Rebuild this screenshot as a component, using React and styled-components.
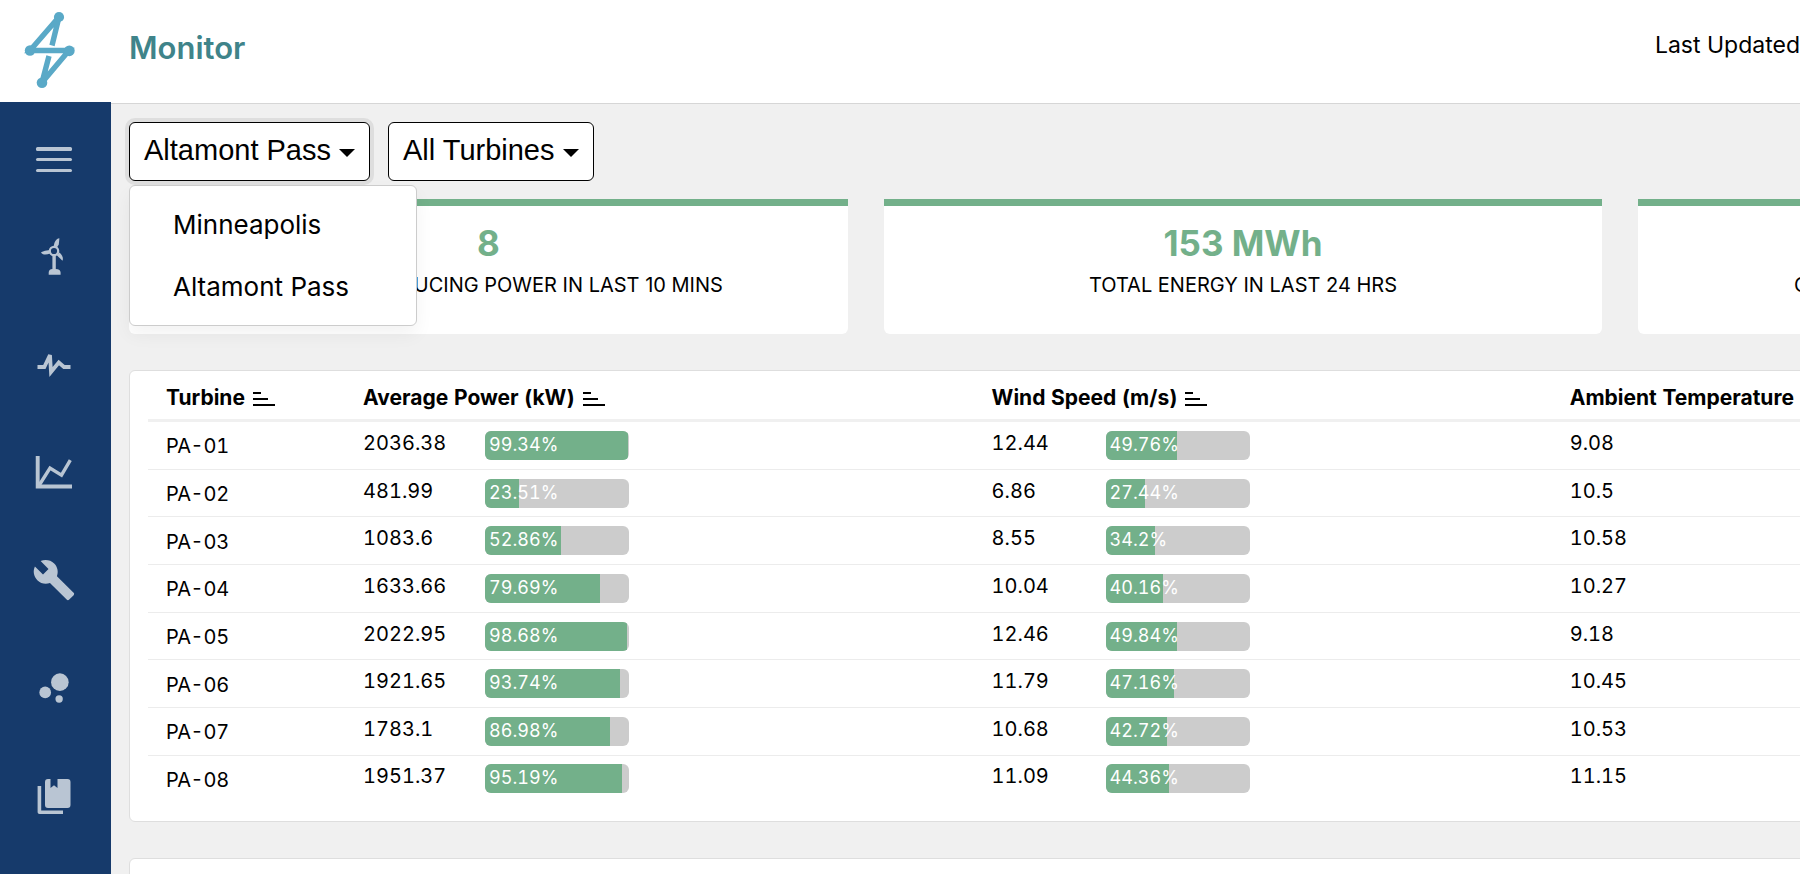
import React from "react";
import styled, { createGlobalStyle } from "styled-components";

const GlobalStyle = createGlobalStyle`
  *, *::before, *::after { box-sizing: border-box; }
  body { margin: 0; background: #f0f0f0; }
  button { font: inherit; color: inherit; }
`;

const Page = styled.div`
  display: grid;
  grid-template-columns: 111px minmax(0, 1fr);
  grid-template-rows: auto 1fr;
  height: 100vh;
  overflow: hidden;
  color: #000;
  background: #f0f0f0;
  font-family: Inter, "Liberation Sans", sans-serif;
  font-size: 20px;
`;

const Brand = styled.a`
  display: flex;
  height: 102px;
  padding: 10px 0 0 22px;
  background: #fff;
`;

const Header = styled.header`
  display: flex;
  justify-content: space-between;
  height: 104px;
  padding-left: 18px;
  background: #fff;
  border-bottom: 1px solid #d6d6d6;
  overflow: hidden;
`;

const Title = styled.h1`
  margin: 0;
  font-size: 31px;
  line-height: 95px;
  font-weight: 600;
  color: #3f848a;
`;

const Updated = styled.p`
  margin: 0;
  font-size: 23px;
  line-height: 91px;
  white-space: nowrap;
`;

const Sidebar = styled.nav`
  display: flex;
  flex-direction: column;
  margin-top: -2px;
  padding: 14px 4px 0 0;
  background: #163a6b;
  color: #b9c5d3;
`;

const NavButton = styled.button`
  display: flex;
  flex: none;
  align-items: center;
  justify-content: center;
  width: 100%;
  height: ${(p) => (p.$compact ? 86 : 108)}px;
  padding: 0;
  border: 0;
  background: none;
`;

const Main = styled.main`
  min-width: 0;
  padding: 18px 0 0 18px;
`;

const Filters = styled.div`
  display: flex;
  gap: 18px;
`;

const Filter = styled.div`
  position: relative;
`;

const FilterButton = styled.button`
  display: flex;
  align-items: center;
  gap: 8px;
  height: 59px;
  padding: 0 14px 2px;
  border: 1px solid #000;
  border-radius: 6px;
  background: #fff;
  font-family: "Liberation Sans", Arial, sans-serif;
  font-size: 29px;
  white-space: nowrap;
  box-shadow: ${(p) => (p.$open ? "0 0 0 4px #dedede" : "none")};
`;

const Caret = styled.span`
  margin-top: 5px;
  border: 8px solid transparent;
  border-top-color: #000;
  border-bottom: 0;
`;

const Menu = styled.ul`
  position: absolute;
  z-index: 2;
  top: 63px;
  left: 0;
  width: 288px;
  margin: 0;
  padding: 7px 0 8px;
  list-style: none;
  background: #fff;
  border: 1px solid #ccc;
  border-radius: 6px;
  box-shadow: 0 9px 18px rgba(0, 0, 0, 0.05);
`;

const MenuItem = styled.button`
  display: block;
  width: 100%;
  height: 62px;
  padding: 0 43px;
  border: 0;
  background: none;
  font-size: 26px;
  text-align: left;
  white-space: nowrap;
`;

const Wide = styled.div`
  width: 133.33%;
`;

const Stats = styled.section`
  display: grid;
  grid-template-columns: repeat(3, minmax(0, 1fr));
  gap: 36px;
  margin-top: 18px;
`;

const Stat = styled.article`
  height: 135px;
  padding-top: 17px;
  background: #fff;
  border-top: 7px solid #73b08a;
  border-radius: 0 0 6px 6px;
  text-align: center;
`;

const StatValue = styled.div`
  font-size: 35px;
  line-height: 40px;
  font-weight: 700;
  color: #73b08a;
`;

const StatLabel = styled.div`
  margin-top: 10px;
  line-height: 24px;
`;

const Panel = styled.section`
  margin-top: 36px;
  min-height: 200px;
  padding: 0 18px 19px;
  background: #fff;
  border: 1px solid #dedede;
  border-radius: 6px;
`;

const Table = styled.table`
  width: 100%;
  height: 431px;
  table-layout: fixed;
  border-collapse: separate;
  border-spacing: 0;
  white-space: nowrap;
  font-variant-numeric: tabular-nums;
`;

const Th = styled.th`
  width: ${(p) => p.$width};
  height: 51px;
  padding: 0 18px;
  border-bottom: 3px solid #f0f0f0;
  font-size: 21px;
  line-height: 26px;
  font-weight: 700;
  text-align: left;
`;

const SortButton = styled.button`
  display: flex;
  align-items: center;
  gap: 8px;
  padding: 6px 0 0;
  border: 0;
  background: none;

  svg { margin-top: 2px; }
`;

const Row = styled.tr`
  &:not(:last-child) td { border-bottom: 1px solid #ececec; }
`;

const Td = styled.td`
  padding: 0 18px;
`;

const NameTd = styled(Td)`
  padding-top: 2px;
`;

const Measure = styled.div`
  display: flex;
  height: 29px;
`;

const Value = styled.span`
  width: ${(p) => p.$width}px;
  line-height: 24px;
`;

const Track = styled.div`
  width: 144px;
  height: 29px;
  border-radius: 6px;
  background: #ccc;
  overflow: hidden;
`;

const Fill = styled.div`
  height: 100%;
  padding-left: 4px;
  background: #73b08a;
  color: #fff;
  font-size: 18px;
  line-height: 28px;
`;

const Logo = () => (
  <svg width="54" height="80" viewBox="22 10 54 80" fill="#5aa9c7" stroke="#5aa9c7" strokeWidth="5.4" aria-hidden="true">
    <path d="M59 17 30 50.5h39L42 82.500M59 17 52 45.500M42 82.500l7-26.500" fill="none" />
    <g stroke="none">
      <circle cx="59" cy="17" r="5.100" />
      <circle cx="30" cy="50.500" r="5.200" />
      <circle cx="69.300" cy="50.800" r="5.400" />
      <circle cx="42" cy="82.700" r="5.300" />
    </g>
  </svg>
);

const Icon = ({ box, children }) => (
  <svg width="44" height="44" viewBox={box || "0 0 44 44"} fill="currentColor" aria-hidden="true">
    {children}
  </svg>
);

const MenuIcon = () => (
  <Icon>
    <rect x="4" y="10" width="36" height="4" rx="1.500" />
    <rect x="4" y="21" width="36" height="3" rx="1.500" />
    <rect x="4" y="32" width="36" height="3" rx="1.500" />
  </Icon>
);

const TurbineIcon = () => (
  <Icon>
    <circle cx="22" cy="17" r="4.200" fill="none" stroke="currentColor" strokeWidth="2.200" />
    <path d="M21.800 12.500C22 8.500 24 4.500 27.400 4.200L26.800 10.500 24.600 14Z" />
    <path d="M18 19.500C14.500 21 10 21 9 18.200L13 16.800 18 16Z" />
    <path d="M24.500 21 27.500 18.500C30.500 21.500 31.500 24 30.500 26.800Z" />
    <path d="M20.400 21.500h3.400V35c3.300.2 4.800 1.600 4.800 3.500v2.200H16.700v-2.200c0-1.900 1.300-3.300 3.700-3.500Z" />
  </Icon>
);

const PulseIcon = () => (
  <Icon>
    <path d="M5.500 25h6.800L18 13l1 17 7.800-9.500 5.200 4.500h6.500" fill="none" stroke="currentColor" strokeWidth="3.800" />
  </Icon>
);

const ChartIcon = () => (
  <Icon>
    <path d="M5.700 6v30.500H40" fill="none" stroke="currentColor" strokeWidth="3.900" />
    <path d="m7 35.500 11-17.500 11.500 7.200 8.800-15" fill="none" stroke="currentColor" strokeWidth="3.400" />
  </Icon>
);

const WrenchIcon = () => (
  <Icon box="0 0 24 24">
    <path d="M22.700 19l-9.100-9.100c.9-2.300.4-5-1.500-6.900-2-2-5-2.400-7.400-1.300L9 6 6 9 1.600 4.700C.4 7.100.9 10.100 2.900 12.100c1.900 1.900 4.600 2.400 6.900 1.500l9.100 9.100c.4.4 1 .4 1.400 0l2.300-2.300c.5-.4.5-1.100.1-1.400z" />
  </Icon>
);

const BubblesIcon = () => (
  <Icon box="0 0 24 24">
    <circle cx="7.200" cy="14.400" r="3.200" />
    <circle cx="14.800" cy="18" r="2" />
    <circle cx="15.200" cy="8.800" r="4.800" />
  </Icon>
);

const LibraryIcon = () => (
  <Icon>
    <path d="M7.400 12v26.300H31" fill="none" stroke="currentColor" strokeWidth="3.600" strokeLinejoin="round" />
    <path d="M16 5h2.500v9l3.500-2.700 3.500 2.700V5H35.500a3 3 0 0 1 3 3v23a3 3 0 0 1-3 3H16a3 3 0 0 1-3-3V8a3 3 0 0 1 3-3Z" />
  </Icon>
);

const SortIcon = () => (
  <svg width="22" height="15" viewBox="0 0 22 15" aria-hidden="true">
    <path d="M0 0h8v2H0zM0 6h15v2H0zM0 12h22v2H0z" />
  </svg>
);

const navItems = [
  ["Turbines", TurbineIcon],
  ["Activity", PulseIcon],
  ["Trends", ChartIcon],
  ["Maintenance", WrenchIcon],
  ["Clusters", BubblesIcon],
  ["Library", LibraryIcon],
];

const stats = [
  ["8", "TURBINES PRODUCING POWER IN LAST 10 MINS"],
  ["153 MWh", "TOTAL ENERGY IN LAST 24 HRS"],
  ["33%", "CAPACITY FACTOR FOR THE LAST 24 HRS"],
];

const columns = [
  ["Turbine", "9%"],
  ["Average Power (kW)", "28.7%"],
  ["Wind Speed (m/s)", "26.4%"],
  ["Ambient Temperature", "35.9%"],
];

const turbines = [
  ["PA-01", "2036.38", 99.34, "12.44", 49.76, "9.08"],
  ["PA-02", "481.99", 23.51, "6.86", 27.44, "10.5"],
  ["PA-03", "1083.6", 52.86, "8.55", 34.2, "10.58"],
  ["PA-04", "1633.66", 79.69, "10.04", 40.16, "10.27"],
  ["PA-05", "2022.95", 98.68, "12.46", 49.84, "9.18"],
  ["PA-06", "1921.65", 93.74, "11.79", 47.16, "10.45"],
  ["PA-07", "1783.1", 86.98, "10.68", 42.72, "10.53"],
  ["PA-08", "1951.37", 95.19, "11.09", 44.36, "11.15"],
];

const Gauge = ({ value, percent, width }) => (
  <Measure>
    <Value $width={width}>{value}</Value>
    <Track>
      <Fill style={{ width: `${percent}%` }}>{percent}%</Fill>
    </Track>
  </Measure>
);

export default function App() {
  return (
    <>
      <GlobalStyle />
      <Page>
        <Brand href="#" aria-label="Home"><Logo /></Brand>
        <Header>
          <Title>Monitor</Title>
          <Updated>Last Updated</Updated>
        </Header>
        <Sidebar>
          <NavButton $compact aria-label="Menu"><MenuIcon /></NavButton>
          {navItems.map(([label, Glyph]) => (
            <NavButton key={label} aria-label={label}><Glyph /></NavButton>
          ))}
        </Sidebar>
        <Main>
          <Filters>
            <Filter>
              <FilterButton $open aria-expanded="true">Altamont Pass<Caret /></FilterButton>
              <Menu>
                <li><MenuItem>Minneapolis</MenuItem></li>
                <li><MenuItem>Altamont Pass</MenuItem></li>
              </Menu>
            </Filter>
            <Filter>
              <FilterButton aria-expanded="false">All Turbines<Caret /></FilterButton>
            </Filter>
          </Filters>
          <Wide>
            <Stats>
              {stats.map(([value, label]) => (
                <Stat key={label}>
                  <StatValue>{value}</StatValue>
                  <StatLabel>{label}</StatLabel>
                </Stat>
              ))}
            </Stats>
            <Panel>
              <Table>
                <thead>
                  <tr>
                    {columns.map(([label, width]) => (
                      <Th key={label} $width={width}>
                        <SortButton>{label}<SortIcon /></SortButton>
                      </Th>
                    ))}
                  </tr>
                </thead>
                <tbody>
                  {turbines.map(([name, power, powerPct, wind, windPct, temp]) => (
                    <Row key={name}>
                      <NameTd>{name}</NameTd>
                      <Td><Gauge value={power} percent={powerPct} width={122} /></Td>
                      <Td><Gauge value={wind} percent={windPct} width={114} /></Td>
                      <Td><Measure><Value $width={114}>{temp}</Value></Measure></Td>
                    </Row>
                  ))}
                </tbody>
              </Table>
            </Panel>
            <Panel />
          </Wide>
        </Main>
      </Page>
    </>
  );
}
